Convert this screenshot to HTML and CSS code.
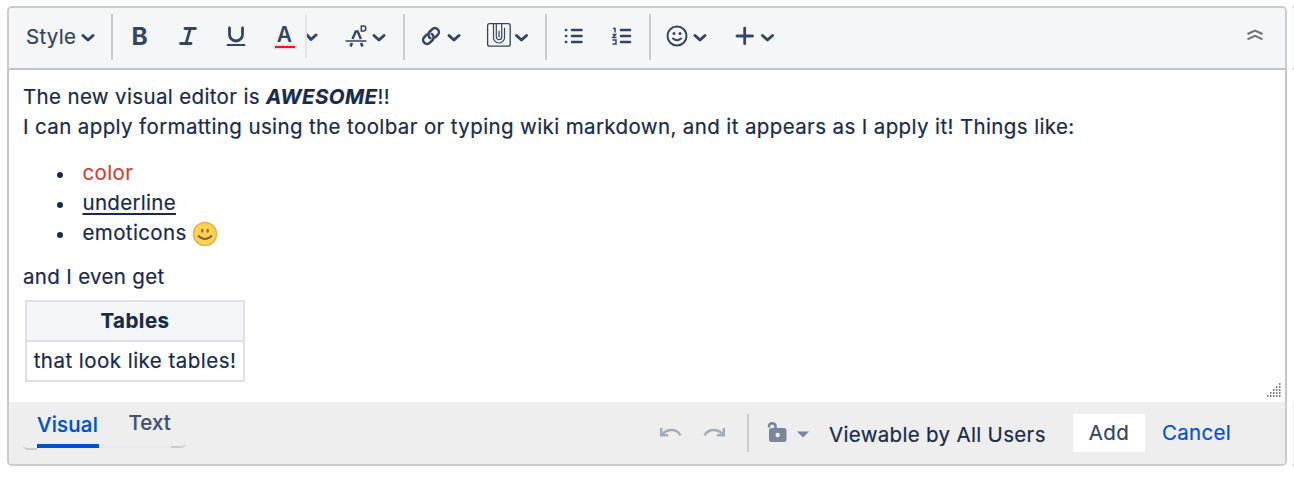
FILE: index.html
```
<!DOCTYPE html>
<html lang="en">
<head>
<meta charset="utf-8">
<title>Visual editor</title>
<link rel="stylesheet" href="styles.css">
</head>
<body>
<div class="page">
<main class="editor">
  <div class="toolbar">
    <div class="group group-style"><span class="style-label">Style</span><svg class="style-chevron" width="14" height="46" viewBox="0 0 14 46"><path class="chev" d="M2 21.5l5 4.500 5-4.500"/></svg></div>
    <div class="group">
      <svg width="48" height="46"><text class="g-bold" x="18.500" y="31">B</text></svg>
      <svg width="50" height="46"><path class="stroke3" d="M24 14.500h10.500M19.500 29.500h10.500M29.300 14.500l-4.300 15"/></svg>
      <svg width="49" height="46"><path class="stroke3" d="M18.500 14v6.500a6.500 6.500 0 0 0 13 0V14"/><path class="stroke2" d="M16.500 31h17"/></svg>
      <svg width="45" height="46"><text class="g-color" x="16.700" y="28">A</text><path class="halo" d="M15.500 33h19"/><path class="red" d="M15 33h20"/></svg>
      <i class="thin"></i>
      <svg width="23" height="46"><path class="chev" d="M0 21l4 4.500 5-4.500"/></svg>
      <svg width="73" height="46"><path class="stroke15" d="M15.500 27h21"/><path class="peak" d="M22.500 25l3.200-7.500h2l3.200 7.500"/><path class="foot" d="M22 29l-1.500 3.500M31 29l1.500 3.500"/><path class="stroke15" d="M31.300 12h2.500q2 0 2 2.500t-2 2.500h-2.500z"/><path class="chev" d="M44 21.500l5 4.500 5-4.500"/></svg>
    </div>
    <div class="group">
      <svg width="69" height="46"><g class="link" transform="translate(26 22) rotate(-45)"><path d="M-2 -4h-3.500a4 4 0 0 0 0 8h3.500a4 4 0 0 0 3.900-5"/><path d="M2 4h3.500a4 4 0 0 0 0-8H2a4 4 0 0 0-3.900 5"/></g><path class="chev" d="M44 21.500l5 4.500 5-4.500"/></svg>
      <svg width="71" height="46"><rect class="stroke12" x="13.600" y="9.600" width="22.600" height="22.600" rx="2"/><path class="clip" d="M19.500 10v13.500a5.500 5.500 0 0 0 11 0V14M22.300 10v13a2.700 2.700 0 0 0 5.400 0V10M25 17v6"/><path class="chev" d="M42.500 21.500l5 4.500 5-4.500"/></svg>
    </div>
    <div class="group">
      <svg width="51" height="46"><path class="stroke26" d="M25 16h9.500M25 22h9.500M25 28h9.500"/><path class="stroke26" d="M19 16h.2M19 22h.2M19 28h.2"/></svg>
      <svg width="51" height="46"><path class="stroke26" d="M23 16h9M23 22h9M23 28h9"/><path class="stroke15" d="M15 14.500h2v4M14.500 20.500h3l-2.500 3h3.500M14.500 26h3.500v4H14.500"/></svg>
    </div>
    <div class="group group-last">
      <svg width="69" height="46"><circle class="stroke2" cx="26" cy="22" r="9.500"/><circle class="dot" cx="23" cy="19.500" r="1.500"/><circle class="dot" cx="29" cy="19.500" r="1.500"/><path class="stroke2" d="M22 24.500q4 3.500 8 0"/><path class="chev" d="M44 21.500l5 4.500 5-4.500"/></svg>
      <svg width="70" height="46"><path class="stroke3" d="M17 22h15.500M24.700 14.200v15.500"/><path class="chev" d="M42.500 21.500l5 4.500 5-4.500"/></svg>
    </div>
    <svg class="collapse" width="18" height="46"><path d="M1.500 20l7.500-3.500 7.500 3.500M1.500 25.300l7.500-3.500 7.500 3.500"/></svg>
  </div>
  <div class="content">
    <p><span class="line-a">The new visual editor is </span><b class="awesome">AWESOME</b>!!<br><span class="line-b">I can apply formatting using the toolbar or typing wiki markdown, and it appears as I apply it! Things like:</span></p>
    <ul>
      <li><span class="colored">color</span></li>
      <li><span class="underlined">underline</span></li>
      <li class="emo">emoticons <svg width="26" height="26" viewBox="0 0 26 26"><circle class="face" cx="13" cy="13" r="11.500"/><path class="eyes" d="M10.300 8v3.500M15.700 8v3.500"/><path class="smile" d="M6 14.500q7 7 14 0"/></svg></li>
    </ul>
    <p class="even">and I even get</p>
    <table><tr><th>Tables</th></tr><tr><td>that look like tables!</td></tr></table>
    <svg class="grip" width="15" height="15"><path d="M13 1h1.500M10 4h4.500M7 7h7.500M4 10h10.500M1 13h13.500"/></svg>
  </div>
  <footer class="footer">
    <div class="tabs"><span class="end end-left"></span><span class="tab active">Visual</span><span class="tab text">Text</span><span class="end end-right"></span></div>
    <div class="actions">
      <svg width="90" height="38"><path class="undo" d="M23.500 21.500c-3.500-6.500-12-7.500-18-1.500M4.200 14v7.200h7"/><path class="undo" d="M47.500 21.500c3.500-6.500 12-7.500 18-1.500M66.800 14v7.200h-7"/></svg>
      <i class="rule"></i>
      <svg width="80" height="38"><path class="shackle" d="M20 13.500v-1c0-4.500 6.500-4.500 6.500 0v4"/><rect class="lock" x="20" y="14" width="17.500" height="14" rx="2.500"/><circle class="hole" cx="28.700" cy="21" r="2.200"/><path class="caret" d="M48 17.500h12l-6 6z"/></svg>
      <span class="viewable">Viewable by All Users</span>
      <button class="add">Add</button>
      <a class="cancel">Cancel</a>
    </div>
  </footer>
</main>
<div class="next"><i class="next-top"></i><i class="next-bottom"></i></div>
</div>
</body>
</html>
```
FILE: styles.css
```
* { box-sizing: border-box; }
body { margin: 0; background: #fff; overflow: hidden; color: #172b4d; font: 20.5px/30px Inter, "Liberation Sans", sans-serif; letter-spacing: 0.38px; -webkit-text-stroke: 0.2px; }
svg { display: block; flex: none; fill: none; }
.page { display: flex; gap: 6px; padding: 6px 0 0 7px; width: 1294px; height: 478px; }
.editor { display: flex; flex-direction: column; width: 1280px; height: 460px; border: 2px solid #ccc; border-radius: 5px; flex: none; }
.toolbar { display: flex; height: 62px; padding-top: 6px; background: #f5f6f8; border-bottom: 2px solid #c1c4d0; border-radius: 3px 3px 0 0; color: #344563; flex: none; }
.group { display: flex; height: 46px; border-right: 2px solid #ccc; }
.group-style { width: 104px; padding-left: 17px; }
.style-label { width: 55px; line-height: 45px; letter-spacing: 0.3px; }
.group-last { border: 0; }
.collapse { margin: 0 21px 0 auto; }
.collapse path { stroke: #707070; stroke-width: 2; }
.thin { width: 2px; height: 43px; margin-top: 1px; background: #e3e4e8; }
.chev { stroke: #344563; stroke-width: 3; stroke-linecap: round; stroke-linejoin: round; }
.stroke3 { stroke: #344563; stroke-width: 2.8; stroke-linecap: round; }
.peak { stroke: #344563; stroke-width: 2.4; }
.foot { stroke: #344563; stroke-width: 2.6; }
.link { stroke: #344563; stroke-width: 2.5; stroke-linecap: round; }
.stroke26 { stroke: #344563; stroke-width: 2.6; stroke-linecap: round; }
.stroke2 { stroke: #344563; stroke-width: 2; stroke-linecap: round; }
.stroke15 { stroke: #344563; stroke-width: 1.5; }
.stroke12 { stroke: #344563; stroke-width: 1.3; }
.clip { stroke: #344563; stroke-width: 1.2; stroke-linecap: round; }
.dot { fill: #344563; }
.g-bold { fill: #344563; font-size: 24.5px; font-weight: 700; letter-spacing: 0; }
.g-color { fill: #344563; font-size: 21px; font-weight: 600; letter-spacing: 0; }
.halo { stroke: #dddee1; stroke-width: 5; stroke-linecap: round; }
.red { stroke: #ff1019; stroke-width: 2; }
.content { position: relative; height: 332px; padding: 12px 14px 0; border: solid #c1c4d0; margin: 0 -2px; border-width: 0 2px; flex: none; }
p { margin: 0; }
.line-a { letter-spacing: 0.35px; }
.awesome { font-style: italic; letter-spacing: 0.4px; }
.even { letter-spacing: 0.32px; }
ul { margin: 16px 0 14px; padding-left: 34px; list-style: none; }
li { display: flex; height: 30px; }
li::before { content: ""; width: 6px; height: 6px; margin: 14px 19.5px 0 0; border-radius: 50%; background: #172b4d; }
.colored { color: #d04437; }
.underlined { text-decoration: underline; text-decoration-thickness: 2px; text-underline-offset: 3px; text-decoration-skip-ink: none; letter-spacing: 0.3px; }
.emo svg { margin: 3px 0 0 5.5px; }
.face { fill: #ffd351; stroke: #dfb249; stroke-width: 1.5; }
.eyes { stroke: #7b6542; stroke-width: 2; }
.smile { stroke: #7b6542; stroke-width: 2; }
table { width: 220px; margin: 8px 0 0 2px; border-collapse: collapse; }
th, td { height: 40px; padding: 0; border: 2px solid #dfe1e6; text-align: center; white-space: nowrap; letter-spacing: 0.47px; }
th { background: #f5f6f8; }
.grip { position: absolute; right: 4px; bottom: 4px; }
.grip path { stroke: #555; stroke-width: 1.5; stroke-dasharray: 1.5 1.5; }
.footer { display: flex; justify-content: space-between; height: 62px; background: #eee; border-radius: 0 0 3px 3px; flex: none; }
.tabs { display: flex; padding-left: 14px; }
.end { width: 14px; height: 48px; border-bottom: 2px solid #ccc; }
.end-left { border-bottom-left-radius: 5px; }
.end-right { width: 15px; height: 46px; border-bottom-right-radius: 5px; }
.tab { height: 46px; line-height: 44px; font-weight: 500; letter-spacing: 0; color: #42526e; }
.tab.active { width: 62px; line-height: 45px; letter-spacing: 0.2px; color: #0052cc; border-bottom: 4px solid #0052cc; }
.tab.text { width: 72px; padding-left: 29.5px; line-height: 41px; border-bottom: 3px solid #e8ebef; }
.actions { display: flex; padding: 12px 53px 0 0; }
.undo { stroke: #a5adba; stroke-width: 2.5; }
.shackle { stroke: #7a869a; stroke-width: 2.5; }
.lock, .caret { fill: #7a869a; }
.hole { fill: #eee; }
.rule { width: 2px; height: 38px; background: #ccc; }
.viewable { width: 244px; line-height: 41px; letter-spacing: 0.32px; white-space: nowrap; }
.add { width: 72px; height: 38px; padding: 0; border: 0; border-radius: 2px; background: #fff; color: #344563; font: inherit; line-height: 38px; letter-spacing: 0.4px; }
.cancel { width: 70px; margin-left: 17px; line-height: 38px; color: #0052cc; letter-spacing: 0.3px; }
.next { display: flex; flex-direction: column; justify-content: space-between; width: 1px; height: 460px; }
.next i { height: 64px; background: #f5f6f8; border: solid #ccc; border-width: 2px 0; }
.next .next-bottom { background: #eee; border-top: 0; }
```
